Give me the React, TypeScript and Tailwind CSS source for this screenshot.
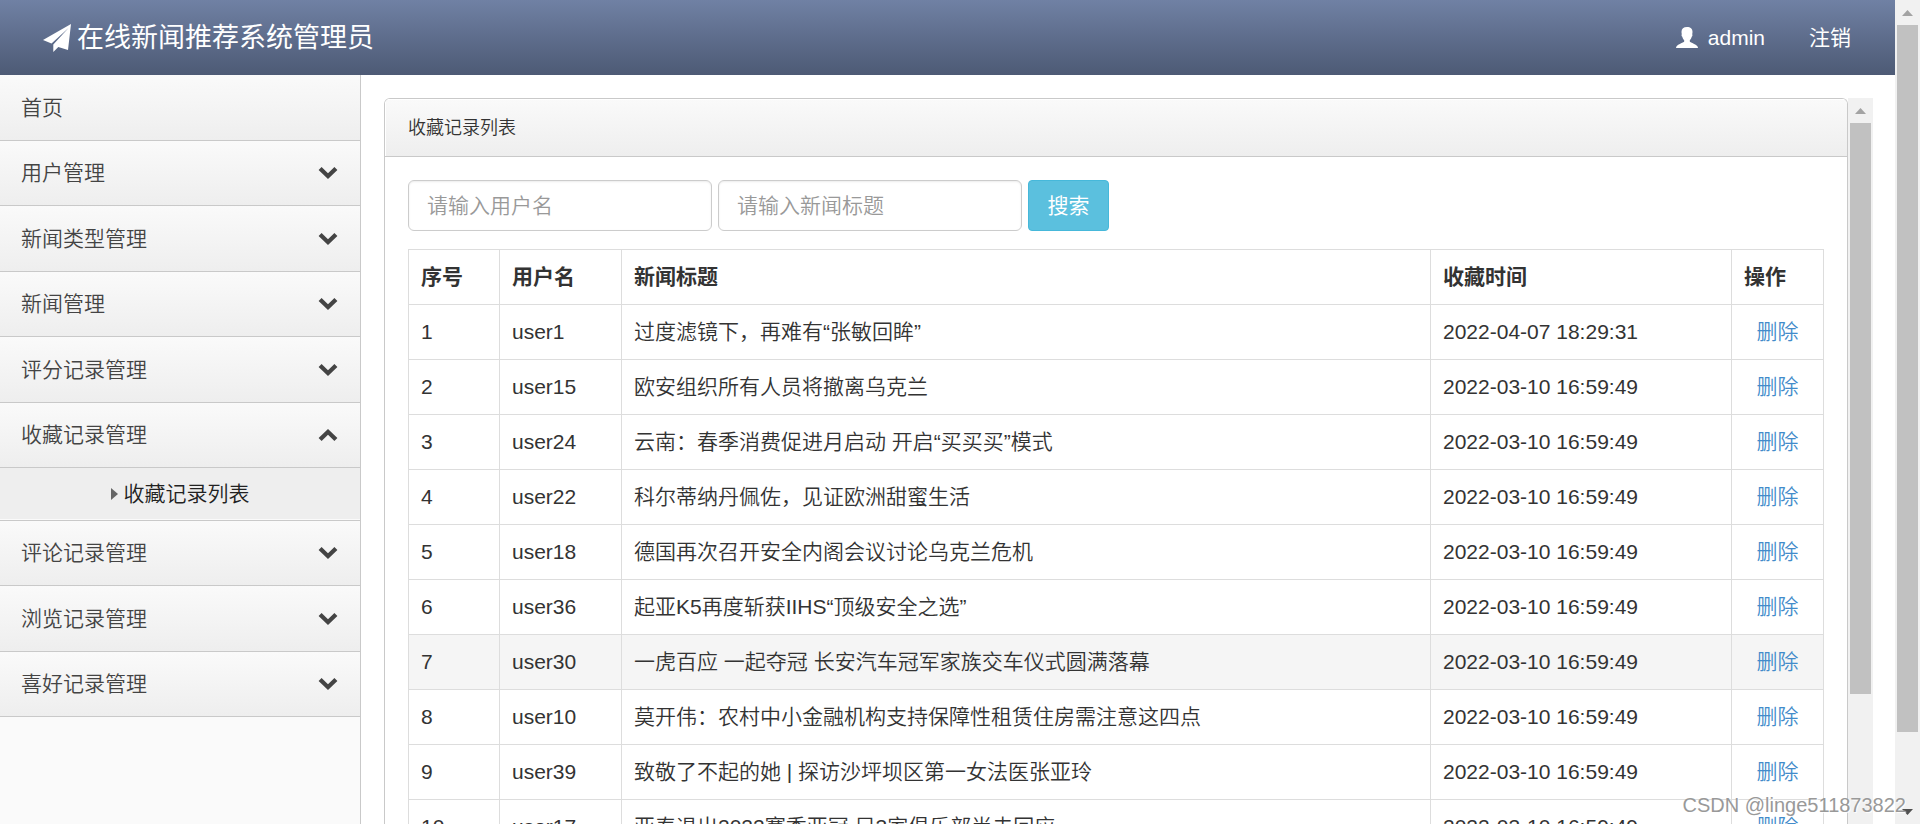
import React from "react";

const menus = [
  { label: "首页" },
  { label: "用户管理", arrow: "down" },
  { label: "新闻类型管理", arrow: "down" },
  { label: "新闻管理", arrow: "down" },
  { label: "评分记录管理", arrow: "down" },
  { label: "收藏记录管理", arrow: "up", child: "收藏记录列表" },
  { label: "评论记录管理", arrow: "down" },
  { label: "浏览记录管理", arrow: "down" },
  { label: "喜好记录管理", arrow: "down" },
];

const records = [
  { id: 1, user: "user1", title: "过度滤镜下，再难有“张敏回眸”", time: "2022-04-07 18:29:31" },
  { id: 2, user: "user15", title: "欧安组织所有人员将撤离乌克兰", time: "2022-03-10 16:59:49" },
  { id: 3, user: "user24", title: "云南：春季消费促进月启动 开启“买买买”模式", time: "2022-03-10 16:59:49" },
  { id: 4, user: "user22", title: "科尔蒂纳丹佩佐，见证欧洲甜蜜生活", time: "2022-03-10 16:59:49" },
  { id: 5, user: "user18", title: "德国再次召开安全内阁会议讨论乌克兰危机", time: "2022-03-10 16:59:49" },
  { id: 6, user: "user36", title: "起亚K5再度斩获IIHS“顶级安全之选”", time: "2022-03-10 16:59:49" },
  { id: 7, user: "user30", title: "一虎百应 一起夺冠 长安汽车冠军家族交车仪式圆满落幕", time: "2022-03-10 16:59:49", active: true },
  { id: 8, user: "user10", title: "莫开伟：农村中小金融机构支持保障性租赁住房需注意这四点", time: "2022-03-10 16:59:49" },
  { id: 9, user: "user39", title: "致敬了不起的她 | 探访沙坪坝区第一女法医张亚玲", time: "2022-03-10 16:59:49" },
  { id: 10, user: "user17", title: "亚泰退出2022赛季亚冠 另3家俱乐部尚未回应", time: "2022-03-10 16:59:49" },
];

function SendIcon() {
  return (
    <svg viewBox="0 0 28 28" className="size-7" fill="#fff" aria-hidden="true">
      <path d="M28 0 0 16l8.500 3.500L25.500 4 10.300 20.500V28l5-5 9.700 3z" />
    </svg>
  );
}

function Chevron({ up }: { up: boolean }) {
  return (
    <svg
      viewBox="0 0 20 14"
      className={up ? "w-5 h-3.5 rotate-180" : "w-5 h-3.5"}
      fill="#444"
      aria-hidden="true"
    >
      <path d="M3.6 1 10 7.2 16.4 1l3 3L10 13 .6 4z" />
    </svg>
  );
}

function UserIcon() {
  return (
    <svg viewBox="0 0 22 21" className="w-[22px] h-[21px]" fill="#fff" aria-hidden="true">
      <path d="M11 0c3.500 0 5.500 1.800 5.500 4.800 0 1-.1 1.700-.3 2.400.5.500.3 1.900-.5 2.500-.3 1.600-1 2.700-1.900 3.500v1.400c.3 1 5.500 2.500 7.400 4.400.5.600.8 1.200.8 2H0c0-.8.300-1.400.8-2 1.900-1.900 7.100-3.400 7.400-4.400v-1.400c-.9-.8-1.600-1.900-1.900-3.500-.8-.6-1-2-.5-2.500-.2-.7-.3-1.400-.3-2.400C5.500 1.800 7.500 0 11 0z" />
    </svg>
  );
}

function Scrollbar({ size, down }: { size: number; down?: boolean }) {
  return (
    <div className="flex w-[25px] shrink-0 flex-col bg-[#f1f1f1]" aria-hidden="true">
      <div className="flex h-[25px] shrink-0 items-center justify-center">
        <svg viewBox="0 0 11 6" className="w-[11px] h-1.5" fill="#a3a3a3">
          <path d="M5.500 0 11 6H0z" />
        </svg>
      </div>
      <div className="min-h-0 grow px-0.5">
        <div className="bg-[#c1c1c1]" style={{ height: `${size}%` }} />
      </div>
      {down && (
        <div className="flex h-[25px] shrink-0 items-center justify-center">
          <svg viewBox="0 0 11 6" className="w-[11px] h-1.5" fill="#505050">
            <path d="M0 0h11L5.500 6z" />
          </svg>
        </div>
      )}
    </div>
  );
}

function Header() {
  return (
    <header className="flex h-[75px] shrink-0 items-center justify-between bg-linear-to-b from-[#7081a4] to-[#4d5a75] pr-11 pl-[43px] font-normal text-white">
      <a href="#" className="flex items-center gap-1.5 text-[27px] leading-10">
        <SendIcon />
        在线新闻推荐系统管理员
      </a>
      <nav className="flex items-center gap-11 text-[21px] leading-[30px]">
        <a href="#" className="flex items-center gap-2.5">
          <UserIcon />
          admin
        </a>
        <a href="#">注销</a>
      </nav>
    </header>
  );
}

function Sidebar() {
  return (
    <aside className="w-[361px] shrink-0 border-r border-[#c9c9c9] bg-[#fafafa] text-[#444]">
      <ul>
        {menus.map((item) => (
          <React.Fragment key={item.label}>
            <li className="border-b border-[#c9c9c9] odd:h-[66px] even:h-[65px]">
              <a
                href="#"
                className="flex h-full items-center justify-between bg-linear-to-b from-[#fafafa] to-[#eee] pr-[22px] pl-[21px]"
              >
                {item.label}
                {item.arrow && <Chevron up={item.arrow === "up"} />}
              </a>
            </li>
            {item.child && (
              <li className="h-[53px] border-b border-[#c9c9c9]">
                <a
                  href="#"
                  className="flex h-full items-center justify-center gap-1.5 border-b border-[#fafafa] bg-[#eee] text-[#222]"
                >
                  <svg viewBox="0 0 7 12" className="h-3 w-[7px]" fill="#666" aria-hidden="true">
                    <path d="M0 0l7 6-7 6z" />
                  </svg>
                  {item.child}
                </a>
              </li>
            )}
          </React.Fragment>
        ))}
      </ul>
    </aside>
  );
}

function SearchForm() {
  const inputClass =
    "h-[51px] w-[304px] rounded-md border border-[#ccc] bg-white px-[18px] text-[21px] text-[#555] shadow-[inset_0_1px_2px_rgba(0,0,0,0.08)] placeholder:text-[#999]";
  return (
    <form className="flex gap-1.5" onSubmit={(e) => e.preventDefault()}>
      <input type="text" aria-label="用户名" placeholder="请输入用户名" className={inputClass} />
      <input type="text" aria-label="新闻标题" placeholder="请输入新闻标题" className={inputClass} />
      <button
        type="submit"
        className="h-[51px] w-[81px] rounded border border-[#46b8da] bg-[#5bc0de] font-normal text-white"
      >
        搜索
      </button>
    </form>
  );
}

function RecordTable() {
  const th = "border border-[#ddd] px-3 text-left font-bold";
  const td = "border border-[#ddd] px-3";
  return (
    <table className="mt-[18px] w-full table-fixed border-collapse">
      <colgroup>
        <col className="w-[91px]" />
        <col className="w-[122px]" />
        <col />
        <col className="w-[301px]" />
        <col className="w-[92px]" />
      </colgroup>
      <thead>
        <tr className="h-[55px]">
          <th className={th}>序号</th>
          <th className={th}>用户名</th>
          <th className={th}>新闻标题</th>
          <th className={th}>收藏时间</th>
          <th className={th}>操作</th>
        </tr>
      </thead>
      <tbody>
        {records.map((r) => (
          <tr key={r.id} className={r.active ? "h-[55px] bg-[#f5f5f5]" : "h-[55px] hover:bg-[#f5f5f5]"}>
            <td className={td}>{r.id}</td>
            <td className={td}>{r.user}</td>
            <td className={td}>{r.title}</td>
            <td className={td}>{r.time}</td>
            <td className="border border-[#ddd] text-center">
              <a href="#" className="text-[#428bca]">
                删除
              </a>
            </td>
          </tr>
        ))}
      </tbody>
    </table>
  );
}

export default function App() {
  return (
    <div className="relative flex h-screen overflow-hidden bg-white font-['Liberation_Sans','Noto_Sans_CJK_SC',sans-serif] text-[21px] leading-[30px] font-[350] text-[#333]">
      <div className="flex min-w-0 grow flex-col">
        <Header />
        <div className="flex min-h-0 grow">
          <Sidebar />
          <main className="flex min-w-0 grow pt-[23px] pr-[22px] pl-[23px]">
            <section className="min-w-0 grow overflow-hidden rounded-t-md border border-b-0 border-[#c9c9c9]">
              <div className="border-b border-[#c9c9c9] bg-linear-to-b from-[#fafafa] to-[#eee] px-[23px] pt-4 pb-3.5 shadow-[inset_1px_1px_0_#fff]">
                <h1 className="text-lg leading-[27px] font-[350]">收藏记录列表</h1>
              </div>
              <div className="p-[23px]">
                <SearchForm />
                <RecordTable />
              </div>
            </section>
            <Scrollbar size={81.5} />
          </main>
        </div>
      </div>
      <Scrollbar size={91.4} down />
      <span className="pointer-events-none absolute right-[14px] bottom-1 text-[20px] text-[#999] [text-shadow:1px_1px_1px_#fff]">
        CSDN @linge511873822
      </span>
    </div>
  );
}
